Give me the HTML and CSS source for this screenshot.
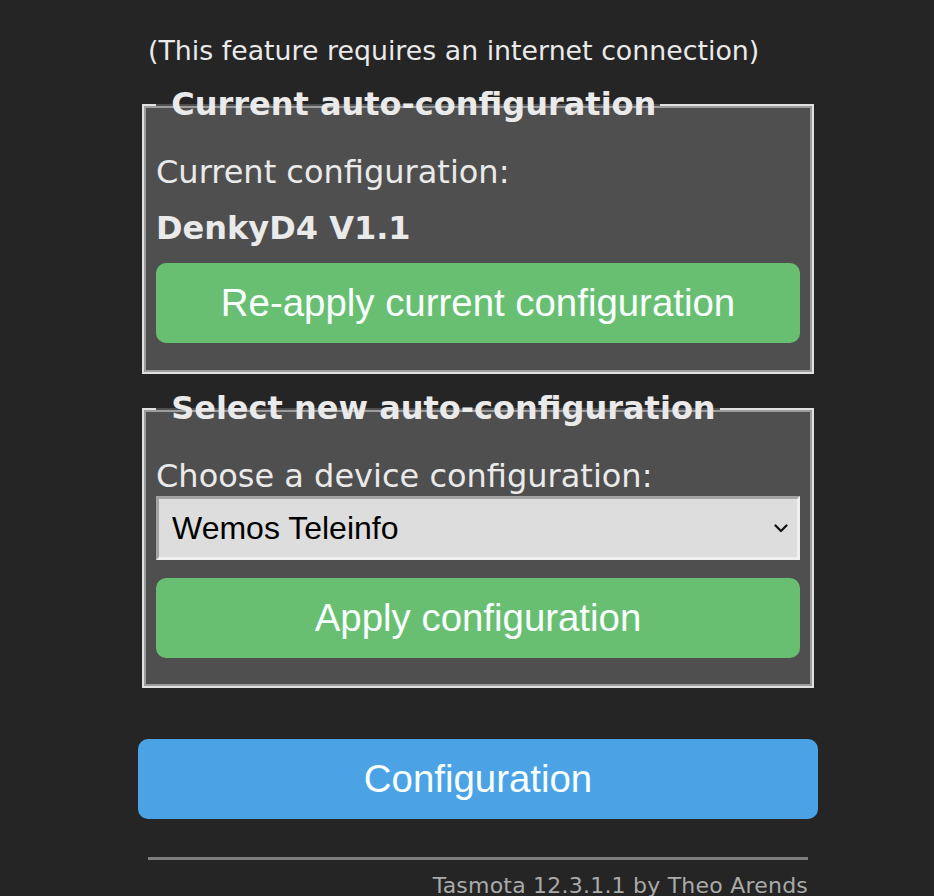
FILE: index.html
```html
<!DOCTYPE html>
<html lang="en">
<head>
<meta charset="utf-8">
<title>Auto-configuration</title>
<link rel="stylesheet" href="styles.css">
</head>
<body>
<div class="main">
  <p class="note">(This feature requires an internet connection)</p>
  <fieldset class="box">
    <legend>&nbsp;Current auto-configuration</legend>
    <p class="label">Current configuration:</p>
    <p class="value">DenkyD4 V1.1</p>
    <button class="btn green">Re-apply current configuration</button>
  </fieldset>
  <fieldset class="box">
    <legend>&nbsp;Select new auto-configuration</legend>
    <p class="label">Choose a device configuration:</p>
    <div class="select-wrap">
      <select class="sel"><option>Wemos Teleinfo</option></select>
      <svg class="chev" width="14" height="9" viewBox="0 0 14 9"><polyline points="1.5,1.5 7,7 12.5,1.5" fill="none" stroke="#111" stroke-width="2.2" stroke-linecap="round" stroke-linejoin="round"/></svg>
    </div>
    <button class="btn green apply">Apply configuration</button>
  </fieldset>
  <button class="btn blue">Configuration</button>
  <div class="footer">
    <hr class="rule">
    <span class="credit">Tasmota 12.3.1.1 by Theo Arends</span>
  </div>
</div>
</body>
</html>
```
FILE: styles.css
```css
html, body {
  margin: 0;
  padding: 0;
  background: #252525;
}
body {
  font-family: "DejaVu Sans", Verdana, sans-serif;
  font-size: 32px;
  line-height: 37px;
  color: #eaeaea;
  overflow: hidden;
}
.main {
  width: 680px;
  margin-left: 138px;
  padding-top: 32px;
}
.note {
  margin: 0;
  padding-left: 10px;
  white-space: nowrap;
  font-size: 26.8px;
}
.box {
  margin: 17px 4px 0;
  padding: 0 12px 10px;
  border: 2px solid #e0e0e0;
  box-shadow: inset 0 0 0 2px #9d9d9d;
  background: #4f4f4f;
  min-width: 0;
}
.box + .box {
  margin-top: 16px;
}
.box legend {
  padding: 0 4px;
  font-weight: bold;
  line-height: 37px;
}
.label {
  margin: 31px 0 0;
}
.value {
  margin: 19px 0 0;
  font-weight: bold;
}
.btn {
  display: block;
  width: 100%;
  border: 0;
  border-radius: 10px;
  height: 80px;
  padding: 0 12px;
  font-family: "Liberation Sans", Arial, Helvetica, sans-serif;
  font-size: 38.4px;
  color: #faffff;
  cursor: pointer;
}
.green {
  background: #69bf71;
  margin: 16px 0 19px;
}
.green.apply {
  margin: 18px 0 18px;
}
.blue {
  background: #4ba3e6;
  margin-top: 51px;
}
.select-wrap {
  position: relative;
  margin-top: 1px;
}
.sel {
  display: block;
  width: 100%;
  height: 64px;
  box-sizing: border-box;
  margin: 0;
  padding: 0 40px 0 13px;
  -webkit-appearance: none;
  appearance: none;
  border-style: solid;
  border-width: 3px;
  border-color: #a3a3a3 #efefef #efefef #a3a3a3;
  border-radius: 0;
  background: #dddddd;
  color: #000;
  font-family: "Liberation Sans", Arial, Helvetica, sans-serif;
  font-size: 32px;
}
.chev {
  position: absolute;
  right: 12px;
  top: 28px;
  pointer-events: none;
}
.footer {
  margin-top: 28px;
  padding: 10px 10px 0;
  text-align: right;
  font-size: 22px;
  line-height: 26px;
  letter-spacing: 0.22px;
}
.rule {
  margin: 0 0 13px;
  height: 3px;
  border: 0;
  background: #7d7d7d;
}
.credit {
  color: #aaaaaa;
}
```
